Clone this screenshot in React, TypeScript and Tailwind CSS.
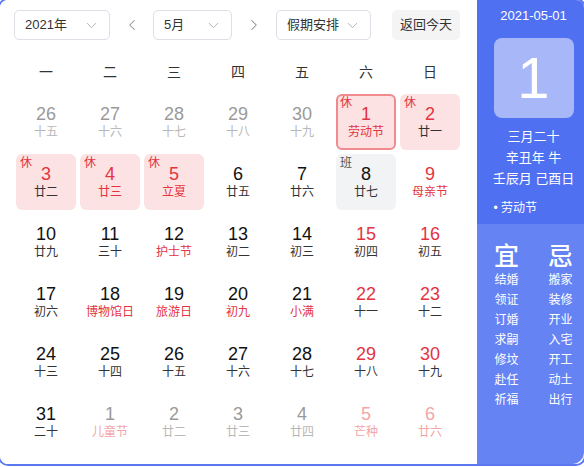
import { ChevronDown, ChevronLeft, ChevronRight } from "lucide-react"

type Tone = "black" | "red" | "gray" | "pink" | "lgray"
type Day = { d: string; l: string; n?: Tone; lc?: Tone; tag?: "休" | "班"; sel?: boolean }

const numCls: Record<Tone, string> = {
  black: "text-[#111]",
  red: "text-[#e3343f]",
  gray: "text-[#9a9a9a]",
  pink: "text-[#f2a6a8]",
  lgray: "text-[#b8b8b8]",
}

const days: Day[] = [
  { d: "26", l: "十五", n: "gray", lc: "lgray" },
  { d: "27", l: "十六", n: "gray", lc: "lgray" },
  { d: "28", l: "十七", n: "gray", lc: "lgray" },
  { d: "29", l: "十八", n: "gray", lc: "lgray" },
  { d: "30", l: "十九", n: "gray", lc: "lgray" },
  { d: "1", l: "劳动节", n: "red", lc: "red", tag: "休", sel: true },
  { d: "2", l: "廿一", n: "red", tag: "休" },
  { d: "3", l: "廿二", n: "red", tag: "休" },
  { d: "4", l: "廿三", n: "red", lc: "red", tag: "休" },
  { d: "5", l: "立夏", n: "red", lc: "red", tag: "休" },
  { d: "6", l: "廿五" },
  { d: "7", l: "廿六" },
  { d: "8", l: "廿七", tag: "班" },
  { d: "9", l: "母亲节", n: "red", lc: "red" },
  { d: "10", l: "廿九" },
  { d: "11", l: "三十" },
  { d: "12", l: "护士节", lc: "red" },
  { d: "13", l: "初二" },
  { d: "14", l: "初三" },
  { d: "15", l: "初四", n: "red" },
  { d: "16", l: "初五", n: "red" },
  { d: "17", l: "初六" },
  { d: "18", l: "博物馆日", lc: "red" },
  { d: "19", l: "旅游日", lc: "red" },
  { d: "20", l: "初九", lc: "red" },
  { d: "21", l: "小满", lc: "red" },
  { d: "22", l: "十一", n: "red" },
  { d: "23", l: "十二", n: "red" },
  { d: "24", l: "十三" },
  { d: "25", l: "十四" },
  { d: "26", l: "十五" },
  { d: "27", l: "十六" },
  { d: "28", l: "十七" },
  { d: "29", l: "十八", n: "red" },
  { d: "30", l: "十九", n: "red" },
  { d: "31", l: "二十" },
  { d: "1", l: "儿童节", n: "gray", lc: "pink" },
  { d: "2", l: "廿二", n: "gray", lc: "lgray" },
  { d: "3", l: "廿三", n: "gray", lc: "lgray" },
  { d: "4", l: "廿四", n: "gray", lc: "lgray" },
  { d: "5", l: "芒种", n: "pink", lc: "pink" },
  { d: "6", l: "廿六", n: "pink", lc: "pink" },
]

const yi = ["结婚", "领证", "订婚", "求嗣", "修坟", "赴任", "祈福"]
const ji = ["搬家", "装修", "开业", "入宅", "开工", "动土", "出行"]

function Select({ label, w }: { label: string; w: string }) {
  return (
    <div className={`${w} h-[30px] flex items-center justify-between pl-[10px] pr-[9px] border border-[#dcdfe6] rounded-[5px] text-[13px] text-[#333]`}>
      <span>{label}</span>
      <ChevronDown size={17} strokeWidth={1.3} className="text-[#a8abb2]" />
    </div>
  )
}

function Cell({ day }: { day: Day }) {
  const bg = day.sel
    ? "bg-[#fde2e3] border-2 border-[#f08a8f]"
    : day.tag === "休"
    ? "bg-[#fde2e3]"
    : day.tag === "班"
    ? "bg-[#f2f3f5]"
    : ""
  const lunar = day.lc ? numCls[day.lc] : "text-[#333]"
  return (
    <div className="p-[2px] h-[60px]">
      <div className={`relative h-full rounded-[6px] flex flex-col items-center justify-center ${bg}`}>
        {day.tag && (
          <span
            className={`absolute ${day.sel ? "left-[2px] top-[1px]" : "left-[4px] top-[3px]"} text-[12px] leading-none ${
              day.tag === "休" ? "text-[#e3343f]" : "text-[#555]"
            }`}
          >
            {day.tag}
          </span>
        )}
        <span className={`text-[18px] leading-[20px] ${numCls[day.n ?? "black"]}`}>{day.d}</span>
        <span className={`text-[12px] leading-[16px] ${lunar}`}>{day.l}</span>
      </div>
    </div>
  )
}

export default function App() {
  return (
    <div className="w-[584px] h-[467px] bg-white overflow-hidden font-['Liberation_Sans','Noto_Sans_CJK_SC',sans-serif]">
      <div className="-ml-[2px] -mt-[2px] w-[588px] h-[468px] border-2 border-[#5b79ee] rounded-[10px] flex overflow-hidden">
        <div className="flex-1 bg-white pl-[14px] pt-[10px]">
          <div className="flex items-center">
            <Select label="2021年" w="w-[96px]" />
            <div className="w-[43px] flex justify-center text-[#909399]">
              <ChevronLeft size={18} strokeWidth={1.4} />
            </div>
            <Select label="5月" w="w-[79px]" />
            <div className="w-[44px] flex justify-center text-[#909399]">
              <ChevronRight size={18} strokeWidth={1.4} />
            </div>
            <Select label="假期安排" w="w-[95px]" />
            <div className="ml-[21px] w-[68px] h-[30px] rounded-[5px] bg-[#f4f4f5] flex items-center justify-center text-[13px] text-[#333]">
              返回今天
            </div>
          </div>
          <div className="mt-[16px] w-[448px] h-[32px] grid grid-cols-7 items-center text-center text-[14px] text-[#333]">
            {["一", "二", "三", "四", "五", "六", "日"].map((w) => (
              <span key={w}>{w}</span>
            ))}
          </div>
          <div className="mt-[4px] w-[448px] grid grid-cols-7">
            {days.map((day, i) => (
              <Cell key={i} day={day} />
            ))}
          </div>
        </div>
        <div className="w-[107px] flex flex-col text-white rounded-br-[12px] overflow-hidden">
          <div className="h-[224px] bg-[#5070f2] pl-[6px] flex flex-col items-center">
            <div className="mt-[7px] text-[13px] leading-[18px]">2021-05-01</div>
            <div className="mt-[13px] w-[80px] h-[80px] rounded-[8px] bg-[#a7b7f8] flex items-center justify-center text-[58px] font-light leading-none">
              1
            </div>
            <div className="mt-[8px] text-[13px] leading-[21px] text-center">
              <div>三月二十</div>
              <div>辛丑年 牛</div>
              <div>壬辰月 己酉日</div>
            </div>
            <div className="mt-[11px] w-[80px] text-[12px] leading-[16px]">• 劳动节</div>
          </div>
          <div className="flex-1 bg-[#6583f3] pl-[6px] flex justify-center">
            <div className="w-[80px] flex justify-between pt-[18px]">
              <div className="flex flex-col items-center w-[26px]">
                <span className="text-[25px] leading-[28px] font-medium">宜</span>
                {yi.map((t) => (
                  <span key={t} className="text-[12px] leading-[20px]">
                    {t}
                  </span>
                ))}
              </div>
              <div className="flex flex-col items-center w-[26px]">
                <span className="text-[25px] leading-[28px] font-medium">忌</span>
                {ji.map((t) => (
                  <span key={t} className="text-[12px] leading-[20px]">
                    {t}
                  </span>
                ))}
              </div>
            </div>
          </div>
        </div>
      </div>
    </div>
  )
}
